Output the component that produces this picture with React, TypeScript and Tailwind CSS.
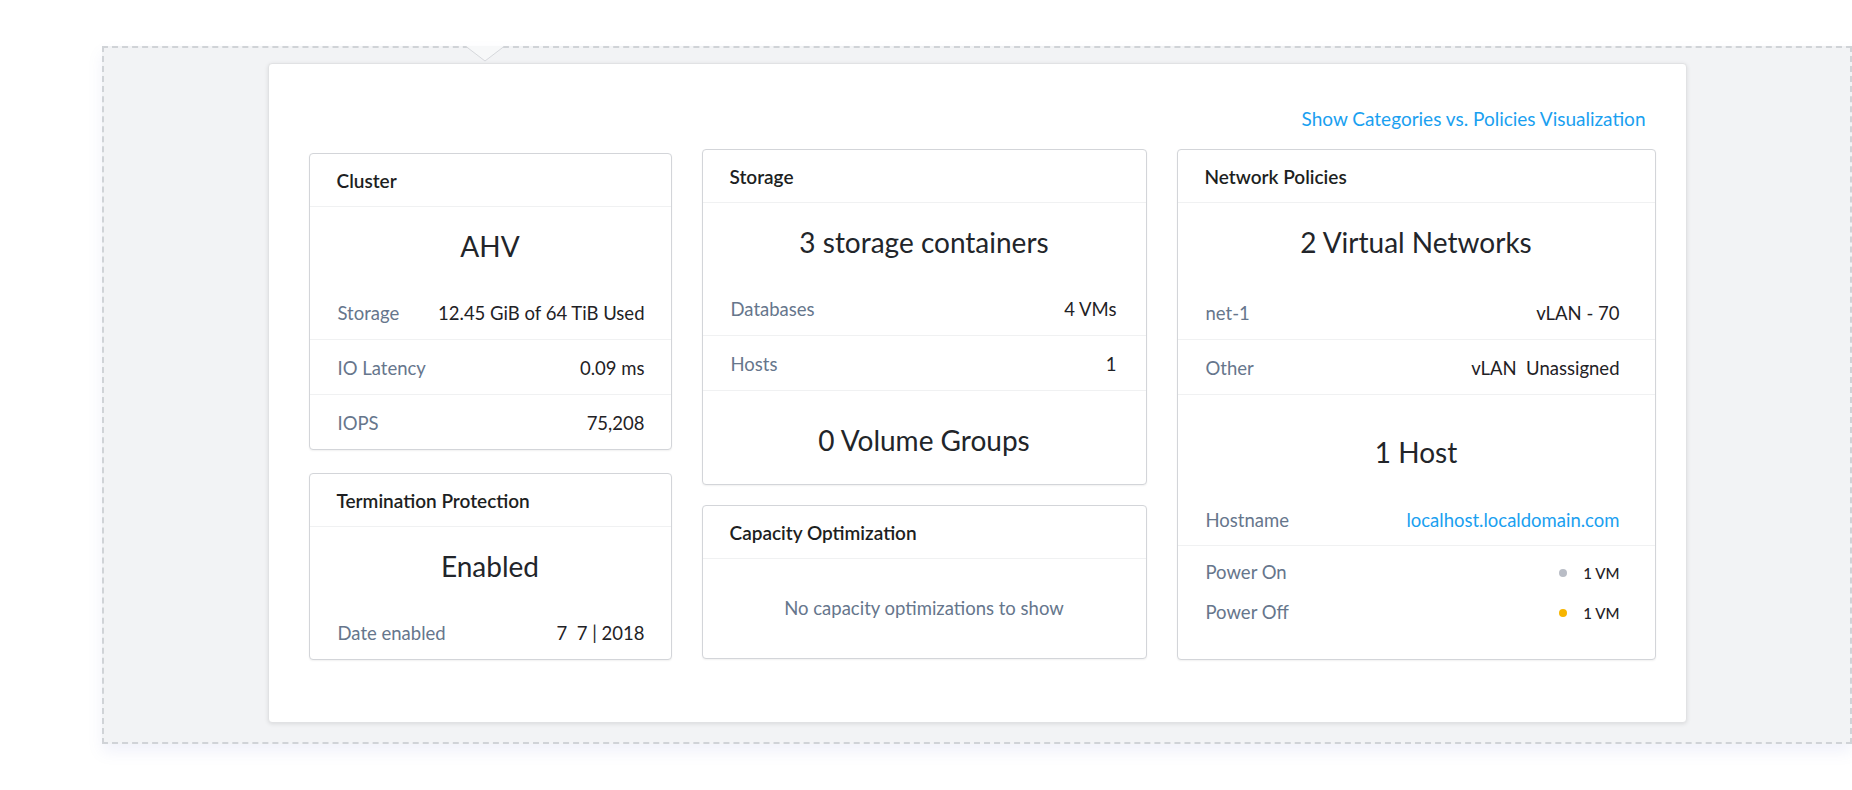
import React from "react";

function Card({
  title,
  children,
  className = "",
}: {
  title: string;
  children: React.ReactNode;
  className?: string;
}) {
  return (
    <div
      className={
        "bg-white border border-[#d3d5d9] rounded-[4px] shadow-[0_1px_2px_rgba(0,0,0,0.06)] " +
        className
      }
    >
      <div className="h-[53px] flex items-center px-[27px] pt-[3px] border-b border-[#f0f1f2] text-[19px] font-semibold text-[#1d1f22]">
        {title}
      </div>
      {children}
    </div>
  );
}

function Hero({ text, h, pt = "" }: { text: string; h: string; pt?: string }) {
  return (
    <div className={"flex items-center justify-center text-[28px] text-[#22252a] " + h + " " + pt}>
      {text}
    </div>
  );
}

function InfoRow({
  label,
  value,
  border,
  pr,
}: {
  label: string;
  value: React.ReactNode;
  border?: boolean;
  pr: string;
}) {
  return (
    <div
      className={
        "h-[55px] flex items-center justify-between pl-[28px] pt-[4px] text-[18.5px] " +
        pr +
        (border ? " border-t border-[#f0f1f2]" : "")
      }
    >
      <span className="text-[#66768c]">{label}</span>
      <span className="text-[#1f2226] whitespace-pre">{value}</span>
    </div>
  );
}

export default function App() {
  return (
    <div className="w-[1852px] h-[790px] bg-white pt-[46px] font-[Lato,'Noto_Sans',sans-serif] overflow-hidden">
      <div className="relative ml-[102px] w-[1750px] h-[698px] border-2 border-dashed border-[#d0d3d7] bg-[#f2f3f5] shadow-[0_8px_14px_rgba(120,130,210,0.10)] pt-[15px]">
        {/* notch arrow */}
        <svg
          className="absolute left-[362px] top-[-2px]"
          width="38"
          height="16"
          viewBox="0 0 38 16"
        >
          <polygon points="0,0 38,0 19,15" fill="#f7f8f9" />
          <polyline points="0,0.5 19,15 38,0.5" fill="none" stroke="#d6d8dc" strokeWidth="1" />
        </svg>

        <div className="mx-auto w-[1419px] h-[660px] bg-white border border-[#e1e2e4] rounded-[4px] shadow-[0_1px_4px_rgba(0,0,0,0.10)]">
          <div className="h-[85px] flex justify-end items-start pt-[44px] pr-[40px]">
            <span className="text-[19px] leading-[22px] text-[#1aa0f0]">
              Show Categories vs. Policies Visualization
            </span>
          </div>

          <div className="flex items-start pl-[40px]">
            {/* column 1 */}
            <div className="w-[363px] mt-[4px] flex flex-col gap-[23px]">
              <Card title="Cluster">
                <Hero text="AHV" h="h-[77px]" />
                <InfoRow label="Storage" value="12.45 GiB of 64 TiB Used" pr="pr-[26px]" />
                <InfoRow label="IO Latency" value="0.09 ms" border pr="pr-[26px]" />
                <InfoRow label="IOPS" value="75,208" border pr="pr-[26px]" />
              </Card>
              <Card title="Termination Protection">
                <Hero text="Enabled" h="h-[77px]" />
                <InfoRow label="Date enabled" value="7  7 | 2018" pr="pr-[26px]" />
              </Card>
            </div>

            {/* column 2 */}
            <div className="w-[445px] ml-[30px] flex flex-col gap-[20px]">
              <Card title="Storage">
                <Hero text="3 storage containers" h="h-[77px]" />
                <InfoRow label="Databases" value="4 VMs" pr="pr-[29px]" />
                <InfoRow label="Hosts" value="1" border pr="pr-[29px]" />
                <div className="border-t border-[#f0f1f2]">
                  <Hero text="0 Volume Groups" h="h-[93px]" pt="pt-[5px]" />
                </div>
              </Card>
              <Card title="Capacity Optimization">
                <div className="h-[99px] flex items-center justify-center text-[18.5px] text-[#66768c]">
                  No capacity optimizations to show
                </div>
              </Card>
            </div>

            {/* column 3 */}
            <div className="w-[479px] ml-[30px]">
              <Card title="Network Policies">
                <Hero text="2 Virtual Networks" h="h-[81px]" pt="pb-[3px]" />
                <InfoRow label="net-1" value="vLAN - 70" pr="pr-[35px]" />
                <InfoRow label="Other" value="vLAN  Unassigned" border pr="pr-[35px]" />
                <div className="border-t border-[#f0f1f2]">
                  <Hero text="1 Host" h="h-[102px]" pt="pt-[12px]" />
                </div>
                <div className="h-[49px] flex items-center justify-between pl-[28px] pr-[35px] border-b border-[#f0f1f2] text-[18.5px]">
                  <span className="text-[#66768c]">Hostname</span>
                  <span className="text-[#1aa0f0]">localhost.localdomain.com</span>
                </div>
                <div className="pt-[7px] pb-[26px]">
                  <div className="h-[40px] flex items-center justify-between pl-[28px] pr-[35px] text-[18.5px]">
                    <span className="text-[#66768c]">Power On</span>
                    <span className="flex items-center gap-[16px]">
                      <span className="w-[8px] h-[8px] rounded-full bg-[#b9bdc6]" />
                      <span className="text-[15px] font-medium text-[#1f2226]">1 VM</span>
                    </span>
                  </div>
                  <div className="h-[40px] flex items-center justify-between pl-[28px] pr-[35px] text-[18.5px]">
                    <span className="text-[#66768c]">Power Off</span>
                    <span className="flex items-center gap-[16px]">
                      <span className="w-[8px] h-[8px] rounded-full bg-[#f7b500]" />
                      <span className="text-[15px] font-medium text-[#1f2226]">1 VM</span>
                    </span>
                  </div>
                </div>
              </Card>
            </div>
          </div>
        </div>
      </div>
    </div>
  );
}
